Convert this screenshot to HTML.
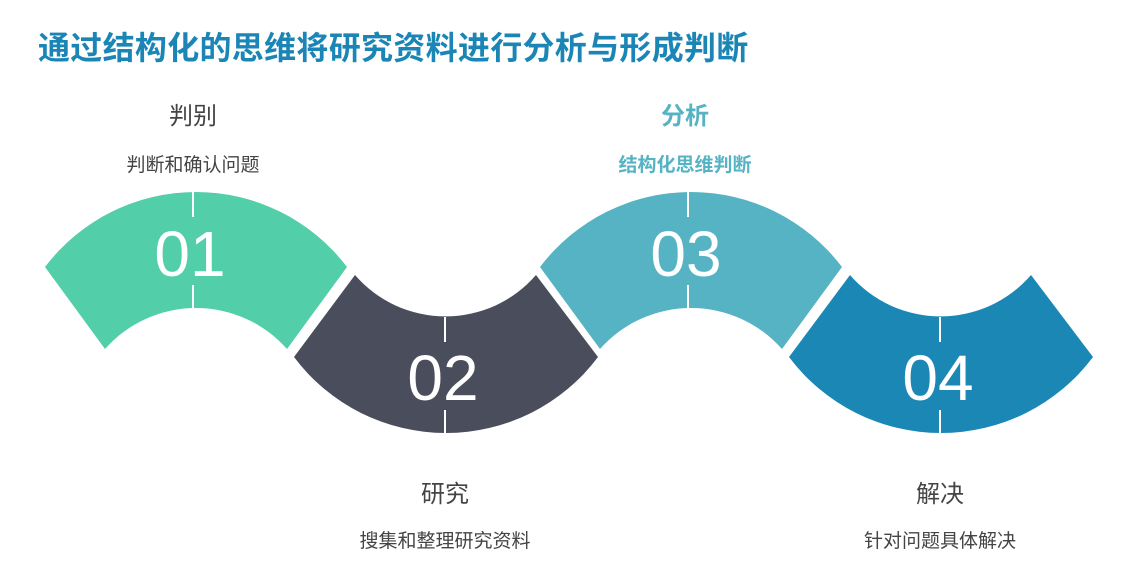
<!DOCTYPE html>
<html><head><meta charset="utf-8"><style>
body{margin:0;width:1136px;height:562px;background:#fff;overflow:hidden;font-family:"Liberation Sans","Noto Sans CJK SC",sans-serif;position:relative}
.t{position:absolute;white-space:nowrap;transform:translateX(-50%)}
</style></head><body>
<div style="position:absolute;left:38px;top:23px;font-size:32px;font-weight:bold;color:#1b86b6;letter-spacing:0.3px">通过结构化的思维将研究资料进行分析与形成判断</div>
<div class="t" style="left:193px;top:96px;font-size:24px;color:#444">判别</div>
<div class="t" style="left:193px;top:150px;font-size:19px;color:#444">判断和确认问题</div>
<div class="t" style="left:685px;top:96px;font-size:24px;color:#56b3c4;font-weight:bold">分析</div>
<div class="t" style="left:685px;top:150px;font-size:19px;color:#56b3c4;font-weight:bold">结构化思维判断</div>
<div class="t" style="left:445px;top:474px;font-size:24px;color:#444">研究</div>
<div class="t" style="left:445px;top:526px;font-size:19px;color:#444">搜集和整理研究资料</div>
<div class="t" style="left:940px;top:474px;font-size:24px;color:#444">解决</div>
<div class="t" style="left:940px;top:526px;font-size:19px;color:#444">针对问题具体解决</div>
<svg width="1136" height="562" style="position:absolute;left:0;top:0">
<defs>
<path id="up" d="M-148,267 A189.5,189.5 0 0 1 154,267 L94,349 A121.5,121.5 0 0 0 -88,349 Z"/>
<path id="dn" d="M-90,275 A119.6,119.6 0 0 0 91,275 L153,357 A190,190 0 0 1 -151,357 Z"/>
</defs>
<use href="#up" x="193" fill="#52cea8"/>
<use href="#dn" x="445" fill="#4a4d5c"/>
<use href="#up" x="688" fill="#56b3c4"/>
<use href="#dn" x="940" fill="#1b87b5"/>
<g stroke="#fff" stroke-width="2">
<line x1="193" y1="192" x2="193" y2="217"/><line x1="193" y1="285" x2="193" y2="308"/>
<line x1="688" y1="192" x2="688" y2="217"/><line x1="688" y1="285" x2="688" y2="308"/>
<line x1="445" y1="317" x2="445" y2="342"/><line x1="445" y1="410" x2="445" y2="433"/>
<line x1="940" y1="317" x2="940" y2="342"/><line x1="940" y1="410" x2="940" y2="433"/>
</g>
<g fill="#fff" font-family="Liberation Sans,sans-serif" font-size="64" text-anchor="middle">
<text x="190" y="276">01</text>
<text x="443" y="400">02</text>
<text x="686" y="276">03</text>
<text x="938" y="400">04</text>
</g>
</svg>
</body></html>
